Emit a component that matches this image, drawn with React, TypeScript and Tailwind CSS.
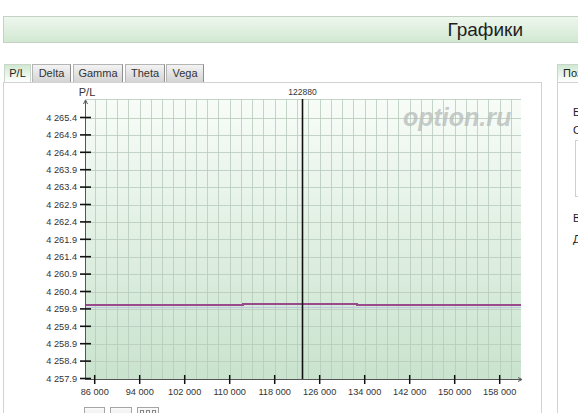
import { FC } from 'react';

const Y_LABELS = [
  '4 265.4', '4 264.9', '4 264.4', '4 263.9', '4 263.4', '4 262.9', '4 262.4', '4 261.9',
  '4 261.4', '4 260.9', '4 260.4', '4 259.9', '4 259.4', '4 258.9', '4 258.4', '4 257.9',
];
const X_LABELS = ['86 000', '94 000', '102 000', '110 000', '118 000', '126 000', '134 000', '142 000', '150 000', '158 000'];

const PLOT = { left: 85, right: 521, top: 99, bottom: 379 };
const yTick = (i: number) => 117.5 + i * 17.4;
const xTick = (i: number) => 94.7 + i * 45;

const tabs = [
  { label: 'P/L', w: 'w-[27px]', active: true },
  { label: 'Delta', w: 'w-[39px] ml-[1px]' },
  { label: 'Gamma', w: 'w-[50px] ml-[2px]' },
  { label: 'Theta', w: 'w-[40px] ml-[2px]' },
  { label: 'Vega', w: 'w-[38px] ml-[1px]' },
];

const Chart: FC = () => {
  const vLines = Array.from({ length: 38 }, (_, k) => Math.round(94.7 + k * 11.25) + 0.5);
  return (
    <svg width={537} height={321} viewBox="4 83 537 321" className="block shrink-0">
      <defs>
        <linearGradient id="plotBg" x1="0" y1="0" x2="0" y2="1">
          <stop offset="0" stopColor="#f8fcf8" />
          <stop offset="0.45" stopColor="#e3f1e5" />
          <stop offset="1" stopColor="#c9e3ce" />
        </linearGradient>
      </defs>

      <rect x={PLOT.left} y={PLOT.top} width={PLOT.right - PLOT.left} height={PLOT.bottom - PLOT.top} fill="url(#plotBg)" />

      {/* grid */}
      {vLines.map((x) => (
        <line key={x} x1={x} x2={x} y1={PLOT.top} y2={PLOT.bottom} stroke="#b7cbbb" strokeOpacity={0.8} />
      ))}
      <line x1={PLOT.left} x2={PLOT.right} y1={99.5} y2={99.5} stroke="#b7cbbb" strokeOpacity={0.8} />
      {Y_LABELS.map((_, i) => (
        <line key={i} x1={PLOT.left} x2={PLOT.right} y1={Math.round(yTick(i)) + 0.5} y2={Math.round(yTick(i)) + 0.5} stroke="#b7cbbb" strokeOpacity={0.8} />
      ))}

      {/* watermark */}
      <text x={403} y={126} fontSize={25} fontWeight="bold" fontStyle="italic" fill="#b8bebb" fillOpacity={0.8} fontFamily="'Liberation Sans', Arial, sans-serif">
        option.ru
      </text>

      {/* series */}
      <line x1={PLOT.left} x2={PLOT.right} y1={307.5} y2={307.5} stroke="#bcc6de" />
      <polyline points="85,305 243,305 243,304 357,304 357,305 521,305" fill="none" stroke="#984a8b" strokeWidth={2} />

      {/* crosshair */}
      <line x1={302.5} x2={302.5} y1={PLOT.top} y2={PLOT.bottom} stroke="#111" strokeWidth={1.6} />
      <text x={302.5} y={95} fontSize={8.5} textAnchor="middle" fill="#333" fontFamily="'Liberation Sans', Arial, sans-serif">122880</text>

      {/* axes */}
      <line x1={85.5} x2={85.5} y1={101} y2={380} stroke="#555" />
      <path d="M83.5 104 L85.5 100 L87.5 104" fill="none" stroke="#555" />
      <line x1={85} x2={521} y1={379.5} y2={379.5} stroke="#555" />
      <path d="M518 377.5 L522 379.5 L518 381.5" fill="none" stroke="#555" />
      <text x={87} y={96} fontSize={11} textAnchor="middle" fill="#333" fontFamily="'Liberation Sans', Arial, sans-serif">P/L</text>

      {Y_LABELS.map((l, i) => (
        <g key={l}>
          <line x1={80} x2={91} y1={yTick(i)} y2={yTick(i)} stroke="#111" strokeWidth={1.6} />
          <text x={77} y={yTick(i) + 3.2} fontSize={9.2} textAnchor="end" fill="#333" fontFamily="'Liberation Sans', Arial, sans-serif">{l}</text>
        </g>
      ))}
      {X_LABELS.map((l, i) => (
        <g key={l}>
          <line x1={xTick(i)} x2={xTick(i)} y1={375} y2={384} stroke="#111" strokeWidth={1.5} />
          <text x={xTick(i)} y={395} fontSize={9.2} textAnchor="middle" fill="#333" fontFamily="'Liberation Sans', Arial, sans-serif">{l}</text>
        </g>
      ))}
    </svg>
  );
};

const App: FC = () => {
  return (
    <div className="w-[578px] h-[413px] overflow-hidden bg-white font-['Liberation_Sans',Arial,sans-serif] text-[#222]">
      <div className="mt-[16px] ml-[3px] h-[27px] border border-r-0 border-[#c6d1c6] bg-linear-to-b from-[#eef7ee] to-[#d2e8d2] flex items-center justify-end pr-[55px]">
        <span className="text-[19px] leading-none text-[#1e1e1e]">Графики</span>
      </div>

      <div className="flex mt-[21px]">
        <div className="ml-[3px] w-[539px] flex flex-col shrink-0">
          <div className="h-[18px] flex items-stretch pl-[1px]">
            {tabs.map((t) => (
              <div
                key={t.label}
                className={`${t.w} flex items-center justify-center text-[11px] leading-none border border-b-0 ${
                  t.active
                    ? 'border-[#c9d6c9] bg-linear-to-b from-[#cfe8d1] to-white text-[#222]'
                    : 'border-[#b4b4b4] border-r-[#8f8f8f] bg-linear-to-b from-[#f3f3f3] to-[#d4d4d4] text-[#333]'
                }`}
              >
                {t.label}
              </div>
            ))}
          </div>
          <div className="h-[331px] border border-b-0 border-[#d2d2d2] flex flex-col overflow-hidden">
            <Chart />
            <div className="flex gap-[5px] pl-[80px] mt-[3px] shrink-0">
              <div className="w-[21px] h-[20px] border border-[#a5a5a5] bg-linear-to-b from-[#fafafa] to-[#dcdcdc]" />
              <div className="w-[22px] h-[20px] border border-[#a5a5a5] bg-linear-to-b from-[#fafafa] to-[#dcdcdc]" />
              <div className="w-[22px] h-[20px] border border-[#a5a5a5] bg-linear-to-b from-[#fafafa] to-[#dcdcdc] flex justify-center gap-[2px] pt-[2px]">
                <span className="w-[4px] h-[3px] border-t border-x border-[#888]" />
                <span className="w-[4px] h-[3px] border-t border-x border-[#888]" />
                <span className="w-[4px] h-[3px] border-t border-x border-[#888]" />
              </div>
            </div>
          </div>
        </div>

        <div className="ml-[15px] flex flex-col shrink-0 w-[40px]">
          <div className="h-[18px] w-[40px] border border-b-0 border-[#c9d6c9] bg-linear-to-b from-[#cfe8d1] to-white text-[11px] leading-none flex items-center pl-[5px] whitespace-nowrap">
            Позиция
          </div>
          <div className="h-[331px] border-l border-t border-[#d2d2d2] pl-[15px] pt-[24px] text-[11px] leading-none whitespace-nowrap">
            <div className="h-[13px]">Базовый актив</div>
            <div className="h-[13px] mt-[5px]">Страйки</div>
            <div className="mt-[2px] ml-[2px] w-[40px] h-[57px] border border-[#cfcfcf]" />
            <div className="h-[13px] mt-[16px]">Волатильность</div>
            <div className="h-[13px] mt-[8px]">Дата</div>
          </div>
        </div>
      </div>
    </div>
  );
};

export default App;
